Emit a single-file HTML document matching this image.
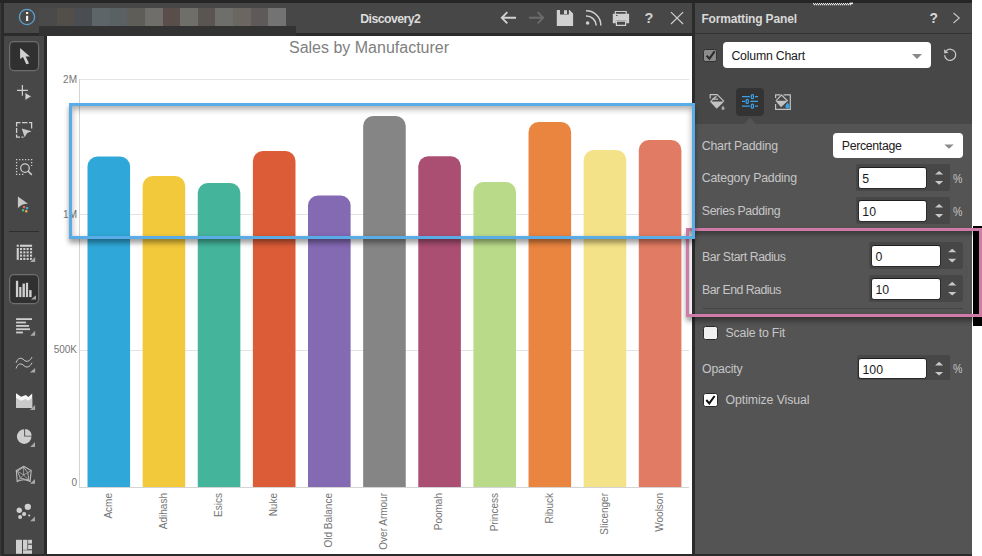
<!DOCTYPE html>
<html><head><meta charset="utf-8">
<style>
*{margin:0;padding:0;box-sizing:border-box}
html,body{width:982px;height:556px;overflow:hidden;background:#fff;font-family:"Liberation Sans",sans-serif}
.a{position:absolute}
.t{position:absolute;white-space:nowrap;line-height:1}
</style></head><body>
<!-- frame -->
<div class="a" style="left:0;top:0;width:973.4px;height:556px;background:#2b2b2b"></div>
<div class="a" style="left:0;top:0;width:973px;height:3px;background:#262626"></div>
<div class="a" style="left:0;top:3px;width:1.3px;height:553px;background:#393939"></div>
<div class="a" style="left:4px;top:3px;width:688px;height:30px;background:#474747"></div>
<div class="a" style="left:4px;top:36px;width:40.2px;height:518px;background:#474747"></div>
<div class="a" style="left:47px;top:36px;width:645px;height:518px;background:#fff"></div>
<!-- panel -->
<div class="a" style="left:695px;top:3px;width:277px;height:30px;background:#474747"></div>
<div class="a" style="left:695px;top:34px;width:277px;height:90px;background:#474747"></div>
<div class="a" style="left:695px;top:124px;width:277px;height:430px;background:#545454"></div>
<div class="a" style="left:972px;top:0;width:10px;height:556px;background:#fff"></div>

<div id="hdrc">
<div class="a" style="left:39px;top:8px;width:18px;height:18px;background:#4a4a4a"></div>
<div class="a" style="left:57px;top:8px;width:17px;height:18px;background:#524e4a"></div>
<div class="a" style="left:74px;top:8px;width:18px;height:18px;background:#4a4e52"></div>
<div class="a" style="left:92px;top:8px;width:18px;height:18px;background:#5e6568"></div>
<div class="a" style="left:110px;top:8px;width:17px;height:18px;background:#5a6163"></div>
<div class="a" style="left:127px;top:8px;width:18px;height:18px;background:#5e5d58"></div>
<div class="a" style="left:145px;top:8px;width:18px;height:18px;background:#706e6b"></div>
<div class="a" style="left:163px;top:8px;width:17px;height:18px;background:#5a4e4a"></div>
<div class="a" style="left:180px;top:8px;width:18px;height:18px;background:#6e6f68"></div>
<div class="a" style="left:198px;top:8px;width:17px;height:18px;background:#5a5553"></div>
<div class="a" style="left:215px;top:8px;width:18px;height:18px;background:#6e6e6b"></div>
<div class="a" style="left:233px;top:8px;width:18px;height:18px;background:#6b6661"></div>
<div class="a" style="left:251px;top:8px;width:17px;height:18px;background:#5e5a59"></div>
<div class="a" style="left:268px;top:8px;width:18px;height:18px;background:#737373"></div>
<div class="a" style="left:39px;top:26px;width:257px;height:10px;background:#333"></div>
<svg class="a" style="left:0;top:0" width="700" height="36" viewBox="0 0 700 36">
<circle cx="27" cy="17" r="7.6" fill="none" stroke="#5aa2cf" stroke-width="1.3"/>
<rect x="26" y="12" width="2.2" height="2" fill="#eee"/>
<rect x="26" y="15.8" width="2.2" height="5.2" fill="#eee"/>
<text x="360.2" y="23" font-family="Liberation Sans" font-weight="bold" font-size="12.3" letter-spacing="-0.55" fill="#dcdcdc">Discovery2</text>
<g stroke="#d2d2d2" stroke-width="1.9" fill="none">
<path d="M501.8,17.8 H516 M507.3,12.2 L501.8,17.8 L507.3,23.4"/>
</g>
<g stroke="#6c6c6c" stroke-width="1.9" fill="none">
<path d="M529,17.8 H543.2 M537.7,12.2 L543.2,17.8 L537.7,23.4"/>
</g>
<path d="M556.8,10 H569.5 L573.1,13.4 V26.1 H556.8 Z M560,10 V14.6 H568.9 V10 Z M564,10.3 V13.9 H567 V10.3 Z" fill="#d0d0d0" fill-rule="evenodd"/>
<circle cx="587.6" cy="23" r="1.8" fill="#d0d0d0"/>
<g stroke="#d0d0d0" stroke-width="1.5" fill="none">
<path d="M586,16 A10,10 0 0 1 596.3,25.5"/>
<path d="M586,10.8 A14.5,14.5 0 0 1 600.8,25.5"/>
</g>
<g fill="#d0d0d0">
<path d="M614.7,10.9 H626.8 V14 H614.7 Z M615.9,12.1 V14 H625.6 V12.1 Z" fill-rule="evenodd"/>
<path d="M612.8,13.8 H629.1 V23.2 H626.2 V20.6 H615.8 V23.2 H612.8 Z"/>
<path d="M615.8,20.6 H626.2 V26 H615.8 Z M617,21.8 V24.8 H625 V21.8 Z" fill-rule="evenodd"/>
</g>
<rect x="616" y="15" width="1.6" height="0.9" fill="#474747"/>
<text x="649" y="23.2" font-family="Liberation Sans" font-weight="bold" font-size="14.5" fill="#d0d0d0" text-anchor="middle">?</text>
<g stroke="#d0d0d0" stroke-width="1.2" fill="none">
<path d="M671,12.1 L683.1,24 M683.1,12.1 L671,24"/>
</g>
</svg>
</div>
<div id="toolc">
<svg class="a" style="left:0;top:0" width="47" height="556" viewBox="0 0 47 556">
<rect x="9.6" y="41.6" width="29" height="29" rx="4.5" fill="#303030" stroke="#6e6e6e" stroke-width="1.2"/>
<path d="M20.1,48 L20.1,59 L23,56.9 L26.3,64.2 L29,63.4 L25.7,56.5 L29.9,56.5 Z" fill="#cfcfcf"/>
<g stroke="#cfcfcf" stroke-width="1.2" fill="none"><path d="M17,90.3 H27.8 M22.4,84.9 V95.8"/></g>
<path d="M25,92.4 L25,100.4 L31.6,96.4 Z" fill="#cfcfcf" stroke="#474747" stroke-width="0.8"/>
<g stroke="#cfcfcf" stroke-width="1.3" fill="none">
<path d="M16,122.6 H20.5 M22,122.6 H27.5 M29,122.6 H32.2 M16.6,122 V126.5 M16.6,128 V133 M16.6,134.5 V137.8 M16,137.2 H20 M21.5,137.2 H23.5 M31.6,122 V128.5"/>
</g>
<path d="M21.7,128.4 L31.6,131.3 L27.2,132.9 L24.6,137.2 Z" fill="#c8c8c8"/>
<g stroke="#cfcfcf" stroke-width="1.3" fill="none" stroke-dasharray="1.3 1.7">
<path d="M16,159.6 H32.5 M16.6,159 V175 M16,174.4 H25 M31.6,159 V166"/>
</g>
<circle cx="25" cy="168.1" r="4.3" fill="#474747" stroke="#cfcfcf" stroke-width="1.2"/>
<path d="M28.2,171.3 L31.8,174.9" stroke="#cfcfcf" stroke-width="1.5"/>
<path d="M17.9,196.5 L17.9,208 Q22,203.5 28,203.7 Z" fill="#c8c8c8"/>
<rect x="23" y="206" width="2.2" height="2.2" fill="#e86a50"/>
<rect x="26" y="207" width="2.2" height="2.2" fill="#4aa8e0"/>
<rect x="22" y="209.2" width="2.2" height="2.2" fill="#4cc080"/>
<rect x="25.2" y="210.2" width="2.2" height="2.2" fill="#f0b050"/>
<rect x="9" y="231" width="30" height="1" fill="#2e2e2e"/>
<rect x="16.7" y="244.7" width="2.1" height="2.1" fill="#cfcfcf"/><rect x="20" y="244.7" width="12.1" height="2.1" fill="#cfcfcf"/><rect x="16.7" y="248" width="2.1" height="11.9" fill="#cfcfcf"/><rect x="20" y="248" width="2.1" height="2.1" fill="#cfcfcf"/><rect x="23.3" y="248" width="2.1" height="2.1" fill="#cfcfcf"/><rect x="26.6" y="248" width="2.1" height="2.1" fill="#cfcfcf"/><rect x="30" y="248" width="2.1" height="2.1" fill="#cfcfcf"/><rect x="20" y="251.3" width="2.1" height="2.1" fill="#cfcfcf"/><rect x="23.3" y="251.3" width="2.1" height="2.1" fill="#cfcfcf"/><rect x="26.6" y="251.3" width="2.1" height="2.1" fill="#cfcfcf"/><rect x="30" y="251.3" width="2.1" height="2.1" fill="#cfcfcf"/><rect x="20" y="254.6" width="2.1" height="2.1" fill="#cfcfcf"/><rect x="23.3" y="254.6" width="2.1" height="2.1" fill="#cfcfcf"/><rect x="26.6" y="254.6" width="2.1" height="2.1" fill="#cfcfcf"/><rect x="30" y="254.6" width="2.1" height="2.1" fill="#cfcfcf"/><rect x="20" y="257.9" width="2.1" height="2.1" fill="#cfcfcf"/><rect x="23.3" y="257.9" width="2.1" height="2.1" fill="#cfcfcf"/><rect x="26.6" y="257.9" width="2.1" height="2.1" fill="#cfcfcf"/><rect x="30" y="257.9" width="2.1" height="2.1" fill="#cfcfcf"/><path d="M35.2,257 L35.2,262 L30,262 Z" fill="#474747" stroke="#474747" stroke-width="1.2"/><path d="M35.2,257 L35.2,262 L30,262 Z" fill="#a8a8a8"/>
<rect x="9.6" y="274.6" width="29" height="29" rx="4.5" fill="#303030" stroke="#6e6e6e" stroke-width="1.2"/>
<rect x="15.9" y="280.8" width="2.3" height="16.3" fill="#cfcfcf"/>
<rect x="19.2" y="287" width="2.2" height="10.1" fill="#cfcfcf"/>
<rect x="22.5" y="283.6" width="2.4" height="13.5" fill="#cfcfcf"/>
<rect x="25.9" y="282.8" width="2.2" height="14.3" fill="#cfcfcf"/>
<rect x="29.2" y="290.1" width="2.4" height="7" fill="#cfcfcf"/>
<path d="M36,295.3 L36,299.5 L31,299.5 Z" fill="#a8a8a8"/><rect x="16.1" y="318.2" width="15.9" height="1.8" fill="#cfcfcf"/><rect x="16.1" y="321.6" width="9.8" height="1.8" fill="#cfcfcf"/><rect x="16.1" y="325" width="12.9" height="1.8" fill="#cfcfcf"/><rect x="16.1" y="328.3" width="13.9" height="1.8" fill="#cfcfcf"/><rect x="16.1" y="331.6" width="6.8" height="1.8" fill="#cfcfcf"/><path d="M35.1,330.8 L35.1,335.7 L30.2,335.7 Z" fill="#a8a8a8"/>
<g stroke="#c8c8c8" stroke-width="1" fill="none">
<path d="M16.1,362.8 C18,357 21.5,357.5 24,360 C26.5,362.5 30,361.5 32,357"/>
<path d="M16.1,368.5 C18,362.7 21.5,363.2 24,365.7 C26.5,368.2 30,367.2 32,362.7"/>
</g><path d="M35.1,368.1 L35.1,372.5 L29.8,372.5 Z" fill="#a8a8a8"/>
<path d="M16,393.2 L21.1,396.8 L25.8,395.1 L28.4,396.9 L32.2,393.6 L32.2,407.8 L16,407.8 Z" fill="#f6f6f6"/>
<path d="M16,397.7 L21.1,400.7 L25.8,399 L28.2,400.7 L32.2,397.7 L32.2,407.8 L16,407.8 Z" fill="#cacaca"/><path d="M35.1,404.9 L35.1,410 L29.8,410 Z" fill="#a8a8a8"/>
<path d="M24.2,436.6 L24.2,429.3 A7.3,7.3 0 1 0 31.5,436.6 Z" fill="#cfcfcf"/>
<path d="M25.1,435.7 L25.1,429.1 A6.6,6.6 0 0 1 31.7,435.7 Z" fill="#cfcfcf"/><path d="M35,442 L35,446.9 L30.2,446.9 Z" fill="#a8a8a8"/>
<g stroke="#bdbdbd" fill="none"><path d="M23.6,466.3 L31.2,470.6 L30.1,481.4 Q23.6,478 17.2,481.4 L16.3,470.6 Z" stroke-width="1.1"/><polygon points="23.60,467.17 27.78,472.58 28.80,480.12 20.40,478.20 17.40,471.26" stroke-width="0.9"/><line x1="23.6" y1="475" x2="23.6" y2="466.3" stroke-width="0.7"/><line x1="23.6" y1="475" x2="31.2" y2="470.6" stroke-width="0.7"/><line x1="23.6" y1="475" x2="30.1" y2="481.4" stroke-width="0.7"/><line x1="23.6" y1="475" x2="17.2" y2="481.4" stroke-width="0.7"/><line x1="23.6" y1="475" x2="16.3" y2="470.6" stroke-width="0.7"/></g><path d="M35,479 L35,483.7 L30,483.7 Z" fill="#a8a8a8"/>
<g fill="#cfcfcf">
<circle cx="27.8" cy="506.9" r="3.2"/><circle cx="19.3" cy="510.2" r="2.7"/><circle cx="24.1" cy="514" r="2.1"/><circle cx="20.1" cy="517" r="2"/><circle cx="29.2" cy="515.5" r="1.1"/>
</g><path d="M35,516.4 L35,521.2 L30.1,521.2 Z" fill="#a8a8a8"/>
<g fill="#cfcfcf">
<rect x="16" y="539.8" width="6" height="14"/>
<rect x="23" y="539.8" width="4.4" height="10"/>
<rect x="28.1" y="539.8" width="3.9" height="3.8"/>
<rect x="28.1" y="544.8" width="3.9" height="4.4"/>
<rect x="23" y="550.3" width="9" height="3.5"/>
</g>
</svg>
</div>
<div id="chartc">
<svg class="a" style="left:0;top:0" width="982" height="556" viewBox="0 0 982 556">
<text x="369" y="53.3" font-family="Liberation Sans" font-size="16" fill="#808080" text-anchor="middle">Sales by Manufacturer</text>
<line x1="79" y1="79.5" x2="689" y2="79.5" stroke="#e3e3e3" stroke-width="1"/>
<line x1="79" y1="214.5" x2="689" y2="214.5" stroke="#e3e3e3" stroke-width="1"/>
<line x1="79" y1="350.5" x2="689" y2="350.5" stroke="#e3e3e3" stroke-width="1"/>
<line x1="79.5" y1="79" x2="79.5" y2="488" stroke="#d4d4d4" stroke-width="1"/>
<text x="77" y="83" font-family="Liberation Sans" font-size="10" fill="#747474" text-anchor="end">2M</text>
<text x="77" y="218" font-family="Liberation Sans" font-size="10" fill="#747474" text-anchor="end">1M</text>
<text x="77" y="353" font-family="Liberation Sans" font-size="10" fill="#747474" text-anchor="end">500K</text>
<text x="77" y="485.5" font-family="Liberation Sans" font-size="10" fill="#747474" text-anchor="end">0</text>
<path d="M87.50,487 V166.50 A10,10 0 0 1 97.50,156.50 H120.10 A10,10 0 0 1 130.10,166.50 V487 Z" fill="#2fa8d9"/>
<text x="111.65" y="493" transform="rotate(-90 111.65 493)" font-family="Liberation Sans" font-size="10" fill="#747474" text-anchor="end">Acme</text>
<path d="M142.63,487 V186.00 A10,10 0 0 1 152.63,176.00 H175.23 A10,10 0 0 1 185.23,186.00 V487 Z" fill="#f3c93c"/>
<text x="166.78" y="493" transform="rotate(-90 166.78 493)" font-family="Liberation Sans" font-size="10" fill="#747474" text-anchor="end">Adihash</text>
<path d="M197.76,487 V193.00 A10,10 0 0 1 207.76,183.00 H230.36 A10,10 0 0 1 240.36,193.00 V487 Z" fill="#44b59b"/>
<text x="221.91" y="493" transform="rotate(-90 221.91 493)" font-family="Liberation Sans" font-size="10" fill="#747474" text-anchor="end">Esics</text>
<path d="M252.89,487 V161.00 A10,10 0 0 1 262.89,151.00 H285.49 A10,10 0 0 1 295.49,161.00 V487 Z" fill="#db5c37"/>
<text x="277.04" y="493" transform="rotate(-90 277.04 493)" font-family="Liberation Sans" font-size="10" fill="#747474" text-anchor="end">Nuke</text>
<path d="M308.02,487 V205.50 A10,10 0 0 1 318.02,195.50 H340.62 A10,10 0 0 1 350.62,205.50 V487 Z" fill="#8469b3"/>
<text x="332.17" y="493" transform="rotate(-90 332.17 493)" font-family="Liberation Sans" font-size="10" fill="#747474" text-anchor="end">Old Balance</text>
<path d="M363.15,487 V126.00 A10,10 0 0 1 373.15,116.00 H395.75 A10,10 0 0 1 405.75,126.00 V487 Z" fill="#858585"/>
<text x="387.30" y="493" transform="rotate(-90 387.30 493)" font-family="Liberation Sans" font-size="10" fill="#747474" text-anchor="end">Over Armour</text>
<path d="M418.28,487 V166.30 A10,10 0 0 1 428.28,156.30 H450.88 A10,10 0 0 1 460.88,166.30 V487 Z" fill="#ab4f72"/>
<text x="442.43" y="493" transform="rotate(-90 442.43 493)" font-family="Liberation Sans" font-size="10" fill="#747474" text-anchor="end">Poomah</text>
<path d="M473.41,487 V192.00 A10,10 0 0 1 483.41,182.00 H506.01 A10,10 0 0 1 516.01,192.00 V487 Z" fill="#b9db89"/>
<text x="497.56" y="493" transform="rotate(-90 497.56 493)" font-family="Liberation Sans" font-size="10" fill="#747474" text-anchor="end">Princess</text>
<path d="M528.54,487 V132.00 A10,10 0 0 1 538.54,122.00 H561.14 A10,10 0 0 1 571.14,132.00 V487 Z" fill="#ea853f"/>
<text x="552.69" y="493" transform="rotate(-90 552.69 493)" font-family="Liberation Sans" font-size="10" fill="#747474" text-anchor="end">Ribuck</text>
<path d="M583.67,487 V160.00 A10,10 0 0 1 593.67,150.00 H616.27 A10,10 0 0 1 626.27,160.00 V487 Z" fill="#f3e288"/>
<text x="607.82" y="493" transform="rotate(-90 607.82 493)" font-family="Liberation Sans" font-size="10" fill="#747474" text-anchor="end">Slicenger</text>
<path d="M638.80,487 V150.00 A10,10 0 0 1 648.80,140.00 H671.40 A10,10 0 0 1 681.40,150.00 V487 Z" fill="#e27b63"/>
<text x="662.95" y="493" transform="rotate(-90 662.95 493)" font-family="Liberation Sans" font-size="10" fill="#747474" text-anchor="end">Woolson</text>
<line x1="79" y1="487.5" x2="689" y2="487.5" stroke="#d4d4d4" stroke-width="1"/>
</svg>
</div>
<div id="panelc">
<div class="t" style="left:701.4px;top:12.84px;font-size:12.0px;letter-spacing:-0.16px;color:#d8d8d8;font-weight:bold">Formatting Panel</div>
<div class="t" style="left:929.6px;top:12.2px;font-size:13.8px;color:#d8d8d8;font-weight:bold">?</div>
<div class="a" style="left:695px;top:33px;width:277px;height:1px;background:#333"></div>
<svg class="a" style="left:812px;top:2px" width="44" height="5"><rect x="1" y="1" width="1" height="1.3" fill="#e6e6e6"/><rect x="2" y="2" width="1" height="1.3" fill="#e6e6e6"/><rect x="3" y="1" width="1" height="1.3" fill="#e6e6e6"/><rect x="4" y="2" width="1" height="1.3" fill="#e6e6e6"/><rect x="5" y="1" width="1" height="1.3" fill="#e6e6e6"/><rect x="6" y="2" width="1" height="1.3" fill="#e6e6e6"/><rect x="7" y="1" width="1" height="1.3" fill="#e6e6e6"/><rect x="8" y="2" width="1" height="1.3" fill="#e6e6e6"/><rect x="9" y="1" width="1" height="1.3" fill="#e6e6e6"/><rect x="10" y="2" width="1" height="1.3" fill="#e6e6e6"/><rect x="11" y="1" width="1" height="1.3" fill="#e6e6e6"/><rect x="12" y="2" width="1" height="1.3" fill="#e6e6e6"/><rect x="13" y="1" width="1" height="1.3" fill="#e6e6e6"/><rect x="14" y="2" width="1" height="1.3" fill="#e6e6e6"/><rect x="15" y="1" width="1" height="1.3" fill="#e6e6e6"/><rect x="16" y="2" width="1" height="1.3" fill="#e6e6e6"/><rect x="17" y="1" width="1" height="1.3" fill="#e6e6e6"/><rect x="18" y="2" width="1" height="1.3" fill="#e6e6e6"/><rect x="19" y="1" width="1" height="1.3" fill="#e6e6e6"/><rect x="20" y="2" width="1" height="1.3" fill="#e6e6e6"/><rect x="21" y="1" width="1" height="1.3" fill="#e6e6e6"/><rect x="22" y="2" width="1" height="1.3" fill="#e6e6e6"/><rect x="23" y="1" width="1" height="1.3" fill="#e6e6e6"/><rect x="24" y="2" width="1" height="1.3" fill="#e6e6e6"/><rect x="25" y="1" width="1" height="1.3" fill="#e6e6e6"/><rect x="26" y="2" width="1" height="1.3" fill="#e6e6e6"/><rect x="27" y="1" width="1" height="1.3" fill="#e6e6e6"/><rect x="28" y="2" width="1" height="1.3" fill="#e6e6e6"/><rect x="29" y="1" width="1" height="1.3" fill="#e6e6e6"/><rect x="30" y="2" width="1" height="1.3" fill="#e6e6e6"/><rect x="31" y="1" width="1" height="1.3" fill="#e6e6e6"/><rect x="32" y="2" width="1" height="1.3" fill="#e6e6e6"/><rect x="33" y="1" width="1" height="1.3" fill="#e6e6e6"/><rect x="34" y="2" width="1" height="1.3" fill="#e6e6e6"/><rect x="35" y="1" width="1" height="1.3" fill="#e6e6e6"/><rect x="36" y="2" width="1" height="1.3" fill="#e6e6e6"/><rect x="37" y="1" width="1" height="1.3" fill="#e6e6e6"/><rect x="38" y="2" width="1" height="1.3" fill="#e6e6e6"/><rect x="38" y="0.6" width="3" height="1.6" fill="#e8e8e8"/></svg>
<div class="a" style="left:702.9px;top:48.6px;width:14.5px;height:13.6px;background:#8c8c8c;border:1.2px solid #333;border-radius:2.5px"></div>
<div class="a" style="left:723px;top:42px;width:208px;height:26px;background:#fff;border-radius:4px"></div>
<div class="t" style="left:731.4px;top:49.59px;font-size:12.3px;letter-spacing:-0.2px;color:#202020;font-weight:normal">Column Chart</div>
<svg class="a" style="left:0;top:0" width="982" height="556">
<path d="M706.6,55.6 L709.4,58.6 L714.6,51.4" stroke="#2a2a2a" stroke-width="2.1" fill="none"/>
<path d="M912,54 L922,54 L917,59 Z" fill="#8a8a8a"/>
<path d="M953.5,13 L959.3,18 L953.5,23" stroke="#c8c8c8" stroke-width="1.1" fill="none"/>
<path d="M946.3,50.8 A5.6,5.6 0 1 1 944.6,55.2" stroke="#c8c8c8" stroke-width="1.3" fill="none"/>
<path d="M944,49.3 L944.3,53.6 L948.5,52.8 Z" fill="#c8c8c8"/>
<rect x="736" y="88" width="28" height="28" rx="4" fill="#333"/>
<path d="M744,124 L750,117.4 L756,124 Z" fill="#545454"/>
<g stroke="#3ba2e6" stroke-width="1.2" fill="none">
<path d="M742,96.6 H749.8 M755,96.6 H758 M742,101.4 H745 M750.2,101.4 H758 M742,106.2 H749.8 M755,106.2 H758"/>
<rect x="751.3" y="94.6" width="2.2" height="4" rx="1"/>
<rect x="746.1" y="99.4" width="2.2" height="4" rx="1"/>
<rect x="751.3" y="104.2" width="2.2" height="4" rx="1"/>
</g>
<g fill="none" stroke="#c2c2c2" stroke-width="1.2">
<path d="M710.2,98.6 V94.6 H717.2 L724,101.4"/>
<path d="M712.5,99.2 L716.5,96.2 M710.6,101.6 L713,99.2 H718"/>
</g>
<path d="M709.8,101.6 H724.2 L716.7,108.8 Z" fill="#c2c2c2"/>
<path d="M723,105.6 Q724.8,108 724.5,109 A1.6,1.6 0 0 1 721.5,109 Q721.3,108 723,105.6 Z" fill="#a8a8a8"/>
<g fill="none" stroke="#c2c2c2" stroke-width="1.2">
<path d="M775.6,98 V94.9 H780.5 M783.5,94.9 H790.3 V109.4 H775.6 V104"/>
<path d="M776,100.6 L781.6,95 L787.6,101"/>
</g>
<path d="M775.5,100.8 H787.8 L781,107.2 Z" fill="#c2c2c2"/>
<path d="M787.5,102.6 Q789.8,105.5 789.6,106.6 A2.1,2.1 0 0 1 785.4,106.6 Q785.2,105.5 787.5,102.6 Z" fill="#3ba2e6"/>
</svg>
<div class="t" style="left:701.8px;top:139.59px;font-size:12.3px;letter-spacing:-0.2px;color:#c6c6c6;font-weight:normal">Chart Padding</div>
<div class="a" style="left:833px;top:132.5px;width:130px;height:25.3px;background:#fff;border-radius:4px"></div>
<div class="t" style="left:841.8px;top:139.59px;font-size:12.3px;letter-spacing:-0.322px;color:#202020;font-weight:normal">Percentage</div>
<svg class="a" style="left:0;top:0" width="982" height="556"><path d="M944.3,144.5 L953.7,144.5 L949,148.7 Z" fill="#8a8a8a"/></svg>
<div class="t" style="left:701.8px;top:172.39px;font-size:12.3px;letter-spacing:-0.213px;color:#c6c6c6;font-weight:normal">Category Padding</div>
<div class="a" style="left:856.3px;top:164.2px;width:93.8px;height:26.4px;background:#474747;border-radius:2px"></div><div class="a" style="left:857.9px;top:167.2px;width:69.6px;height:21.8px;background:#fff;border-radius:3px;border-top:1.5px solid #1e1e1e;border-left:1px solid #2a2a2a;border-right:1px solid #2a2a2a;border-bottom:1px solid #2a2a2a"></div><div class="t" style="left:862.3px;top:172.89px;font-size:12.3px;letter-spacing:0px;color:#1a1a1a;font-weight:normal">5</div><svg class="a" style="left:0;top:0" width="982" height="556"><path d="M935,174.6 L939.1,171 L943.2,174.6 Z" fill="#c8c8c8"/><path d="M935,181.1 L943.2,181.1 L939.1,184.7 Z" fill="#c8c8c8"/></svg>
<div class="t" style="left:953.3px;top:172.63px;font-size:12.6px;letter-spacing:0px;color:#c6c6c6;font-weight:normal;transform:scaleX(0.84);transform-origin:0 0">%</div>
<div class="t" style="left:701.8px;top:205.19px;font-size:12.3px;letter-spacing:-0.362px;color:#c6c6c6;font-weight:normal">Series Padding</div>
<div class="a" style="left:856.3px;top:197.2px;width:93.8px;height:26.4px;background:#474747;border-radius:2px"></div><div class="a" style="left:857.9px;top:200.2px;width:69.6px;height:21.8px;background:#fff;border-radius:3px;border-top:1.5px solid #1e1e1e;border-left:1px solid #2a2a2a;border-right:1px solid #2a2a2a;border-bottom:1px solid #2a2a2a"></div><div class="t" style="left:862.3px;top:205.89px;font-size:12.3px;letter-spacing:0px;color:#1a1a1a;font-weight:normal">10</div><svg class="a" style="left:0;top:0" width="982" height="556"><path d="M935,207.6 L939.1,204 L943.2,207.6 Z" fill="#c8c8c8"/><path d="M935,214.1 L943.2,214.1 L939.1,217.7 Z" fill="#c8c8c8"/></svg>
<div class="t" style="left:953.3px;top:205.63px;font-size:12.6px;letter-spacing:0px;color:#c6c6c6;font-weight:normal;transform:scaleX(0.84);transform-origin:0 0">%</div>
<div class="t" style="left:702.0px;top:251.09px;font-size:12.3px;letter-spacing:-0.42px;color:#c6c6c6;font-weight:normal">Bar Start Radius</div>
<div class="a" style="left:869.4px;top:241.9px;width:93.6px;height:26.9px;background:#474747;border-radius:2px"></div><div class="a" style="left:871.0px;top:244.9px;width:69.6px;height:22.3px;background:#fff;border-radius:3px;border-top:1.5px solid #1e1e1e;border-left:1px solid #2a2a2a;border-right:1px solid #2a2a2a;border-bottom:1px solid #2a2a2a"></div><div class="t" style="left:875.4px;top:250.79px;font-size:12.3px;letter-spacing:0px;color:#1a1a1a;font-weight:normal">0</div><svg class="a" style="left:0;top:0" width="982" height="556"><path d="M948.1,252.29999999999998 L952.2,248.7 L956.3000000000001,252.29999999999998 Z" fill="#c8c8c8"/><path d="M948.1,258.8 L956.3000000000001,258.8 L952.2,262.4 Z" fill="#c8c8c8"/></svg>
<div class="t" style="left:702.0px;top:283.89px;font-size:12.3px;letter-spacing:-0.515px;color:#c6c6c6;font-weight:normal">Bar End Radius</div>
<div class="a" style="left:869.4px;top:275px;width:93.6px;height:27.0px;background:#474747;border-radius:2px"></div><div class="a" style="left:871.0px;top:278.0px;width:69.6px;height:22.4px;background:#fff;border-radius:3px;border-top:1.5px solid #1e1e1e;border-left:1px solid #2a2a2a;border-right:1px solid #2a2a2a;border-bottom:1px solid #2a2a2a"></div><div class="t" style="left:875.4px;top:283.59px;font-size:12.3px;letter-spacing:0px;color:#1a1a1a;font-weight:normal">10</div><svg class="a" style="left:0;top:0" width="982" height="556"><path d="M948.1,285.40000000000003 L952.2,281.8 L956.3000000000001,285.40000000000003 Z" fill="#c8c8c8"/><path d="M948.1,291.90000000000003 L956.3000000000001,291.90000000000003 L952.2,295.5 Z" fill="#c8c8c8"/></svg>
<div class="a" style="left:703px;top:308px;width:260px;height:1px;background:#444"></div>
<div class="a" style="left:703.3px;top:325.8px;width:14.4px;height:14px;background:#f0f0f0;border:1.2px solid #2a2a2a;border-radius:2.5px"></div>
<div class="t" style="left:725.6px;top:326.59px;font-size:12.3px;letter-spacing:-0.182px;color:#c6c6c6;font-weight:normal">Scale to Fit</div>
<div class="t" style="left:702.0px;top:363.29px;font-size:12.3px;letter-spacing:-0.167px;color:#c6c6c6;font-weight:normal">Opacity</div>
<div class="a" style="left:856.5px;top:354.8px;width:93.3px;height:25.6px;background:#474747;border-radius:2px"></div><div class="a" style="left:858.1px;top:357.8px;width:68.9px;height:21.0px;background:#fff;border-radius:3px;border-top:1.5px solid #1e1e1e;border-left:1px solid #2a2a2a;border-right:1px solid #2a2a2a;border-bottom:1px solid #2a2a2a"></div><div class="t" style="left:862.5px;top:363.59px;font-size:12.3px;letter-spacing:0px;color:#1a1a1a;font-weight:normal">100</div><svg class="a" style="left:0;top:0" width="982" height="556"><path d="M935,365.40000000000003 L939.1,361.8 L943.2,365.40000000000003 Z" fill="#c8c8c8"/><path d="M935,371.90000000000003 L943.2,371.90000000000003 L939.1,375.5 Z" fill="#c8c8c8"/></svg>
<div class="t" style="left:953.1px;top:363.33px;font-size:12.6px;letter-spacing:0px;color:#c6c6c6;font-weight:normal;transform:scaleX(0.84);transform-origin:0 0">%</div>
<div class="a" style="left:703.3px;top:393px;width:14.4px;height:13.8px;background:#fff;border:1.2px solid #2a2a2a;border-radius:2.5px"></div>
<svg class="a" style="left:0;top:0" width="982" height="556"><path d="M706.3,400 L709.3,403.4 L714.6,396" stroke="#111" stroke-width="2" fill="none"/></svg>
<div class="t" style="left:725.6px;top:393.59px;font-size:12.3px;letter-spacing:-0.093px;color:#c6c6c6;font-weight:normal">Optimize Visual</div>
</div>
<div id="overlay">
<div class="a" style="left:972.8px;top:226px;width:10px;height:100px;background:#000"></div>
<div class="a" style="left:686px;top:228px;width:296px;height:89px;border:3px solid #cf7aa7;box-shadow:0 4px 5px rgba(0,0,0,.38), inset 0 3px 5px rgba(0,0,0,.34)"></div>
<div class="a" style="left:69px;top:103px;width:626px;height:136px;border:3px solid #5aace6;box-shadow:0 4px 5px rgba(0,0,0,.38), inset 0 3px 6px rgba(0,0,0,.34)"></div>
</div>
</body></html>
